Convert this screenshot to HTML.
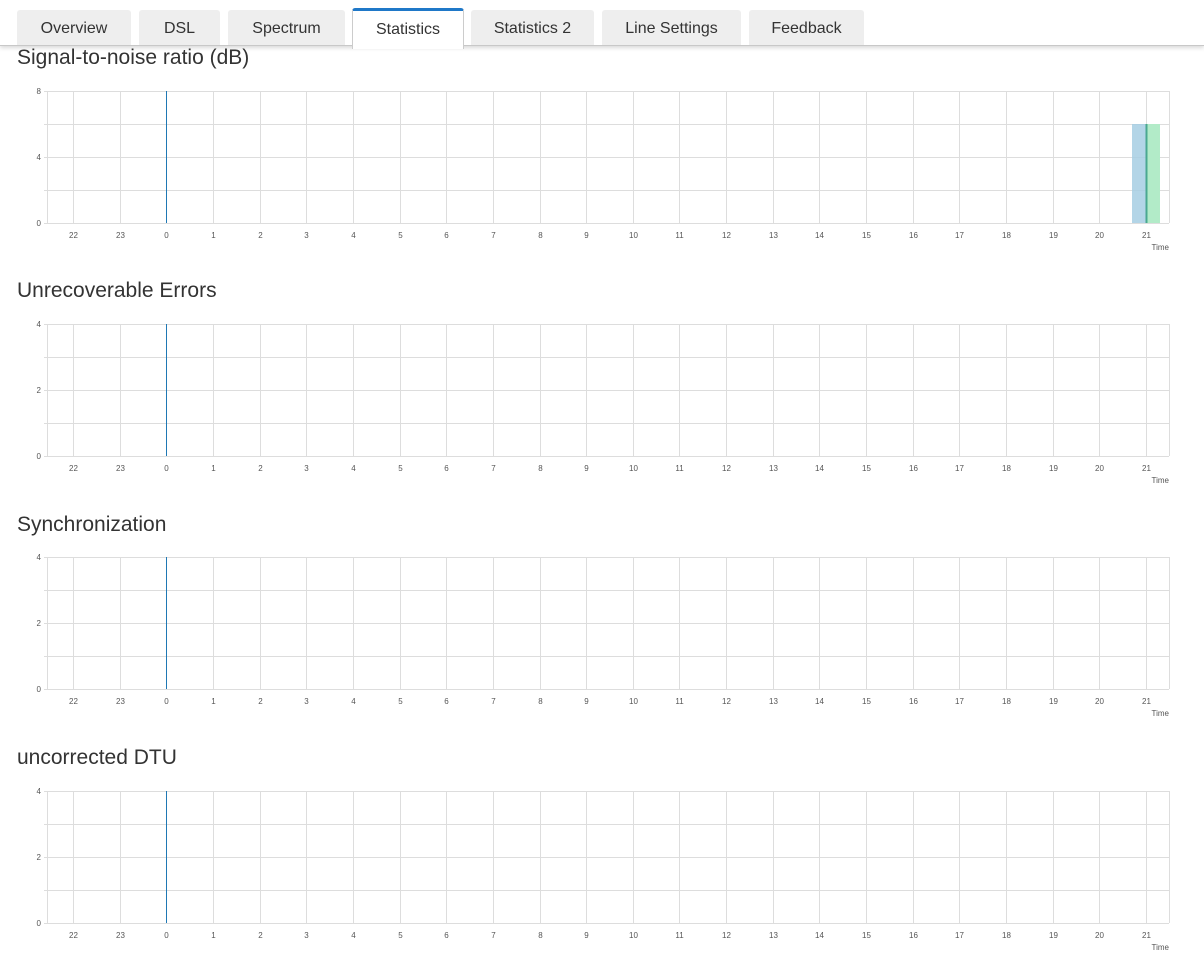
<!DOCTYPE html>
<html><head><meta charset="utf-8"><style>
body{margin:0;width:1204px;height:800px;overflow:hidden;background:#fff;font-family:"Liberation Sans",sans-serif;color:#333;position:relative}
.bar{position:absolute;left:0;top:0;width:1204px;height:45px;border-bottom:1px solid #c8c8c8;box-shadow:0 2px 4px rgba(0,0,0,.15);background:#fff}
.tab{position:absolute;top:10px;height:35px;background:#eeeeee;border-radius:3px 3px 0 0;font-size:16px;color:#333;text-align:center;line-height:37px}
.tab.act{background:#fff;border-top:3px solid #1f78c8;top:8px;height:35px;border-left:1px solid #ccc;border-right:1px solid #ccc;line-height:37px;z-index:2;height:38px}
h2{position:absolute;left:17px;margin:0;font-weight:normal;font-size:21px;color:#333}
svg{position:absolute;left:0}
</style></head><body>
<div class="bar"></div>
<div class="tab" style="left:17px;width:114px">Overview</div>
<div class="tab" style="left:139px;width:81px">DSL</div>
<div class="tab" style="left:228px;width:117px">Spectrum</div>
<div class="tab act" style="left:352px;width:110px">Statistics</div>
<div class="tab" style="left:471px;width:123px">Statistics 2</div>
<div class="tab" style="left:602px;width:139px">Line Settings</div>
<div class="tab" style="left:749px;width:115px">Feedback</div>
<h2 style="top:46px">Signal-to-noise ratio (dB)</h2>
<h2 style="top:279px">Unrecoverable Errors</h2>
<h2 style="top:513px">Synchronization</h2>
<h2 style="top:746px">uncorrected DTU</h2>
<div id="c"></div>
<script>
var tops=[91,324,557,791],maxs=["8","4","4","4"],mids=["4","2","2","2"];
var hrs=[22,23,0,1,2,3,4,5,6,7,8,9,10,11,12,13,14,15,16,17,18,19,20,21];
var h='';
tops.forEach(function(t,k){
 var s='<svg style="top:'+(t-6)+'px" width="1204" height="170">';
 var o=6,b=o+132;
 for(var j=0;j<5;j++){var y=o+j*33;s+='<line x1="44" x2="1169" y1="'+(y+.5)+'" y2="'+(y+.5)+'" stroke="#ddd"/>';}
 s+='<line x1="47.5" x2="47.5" y1="'+o+'" y2="'+b+'" stroke="#ddd"/><line x1="1169.5" x2="1169.5" y1="'+o+'" y2="'+b+'" stroke="#ddd"/>';
 for(var i=0;i<24;i++){var x=Math.round(73+i*46.65)+.5;s+='<line x1="'+x+'" x2="'+x+'" y1="'+o+'" y2="'+b+'" stroke="#ddd"/>';
  s+='<text x="'+x+'" y="'+(b+15)+'" font-size="8" fill="#555" text-anchor="middle" font-family="Liberation Sans">'+hrs[i]+'</text>';}
 s+='<text x="1169" y="'+(b+27)+'" font-size="8" fill="#555" text-anchor="end" font-family="Liberation Sans">Time</text>';
 s+='<text x="41" y="'+(o+3)+'" font-size="8" fill="#555" text-anchor="end">'+maxs[k]+'</text>';
 s+='<text x="41" y="'+(o+69)+'" font-size="8" fill="#555" text-anchor="end">'+mids[k]+'</text>';
 s+='<text x="41" y="'+(b+3)+'" font-size="8" fill="#555" text-anchor="end">0</text>';
 s+='<line x1="166.5" x2="166.5" y1="'+o+'" y2="'+b+'" stroke="#1f78b4" stroke-width="1"/>';
 if(k==0){s+='<rect x="1132" y="'+(o+33)+'" width="14" height="99" fill="#a6cee3" opacity=".85"/><rect x="1146" y="'+(o+33)+'" width="14" height="99" fill="#b2ebc8"/><line x1="1146.5" x2="1146.5" y1="'+(o+33)+'" y2="'+b+'" stroke="#4aa890" stroke-width="2"/>';}
 s+='</svg>';h+=s;});
document.getElementById('c').innerHTML=h;
</script>
</body></html>
